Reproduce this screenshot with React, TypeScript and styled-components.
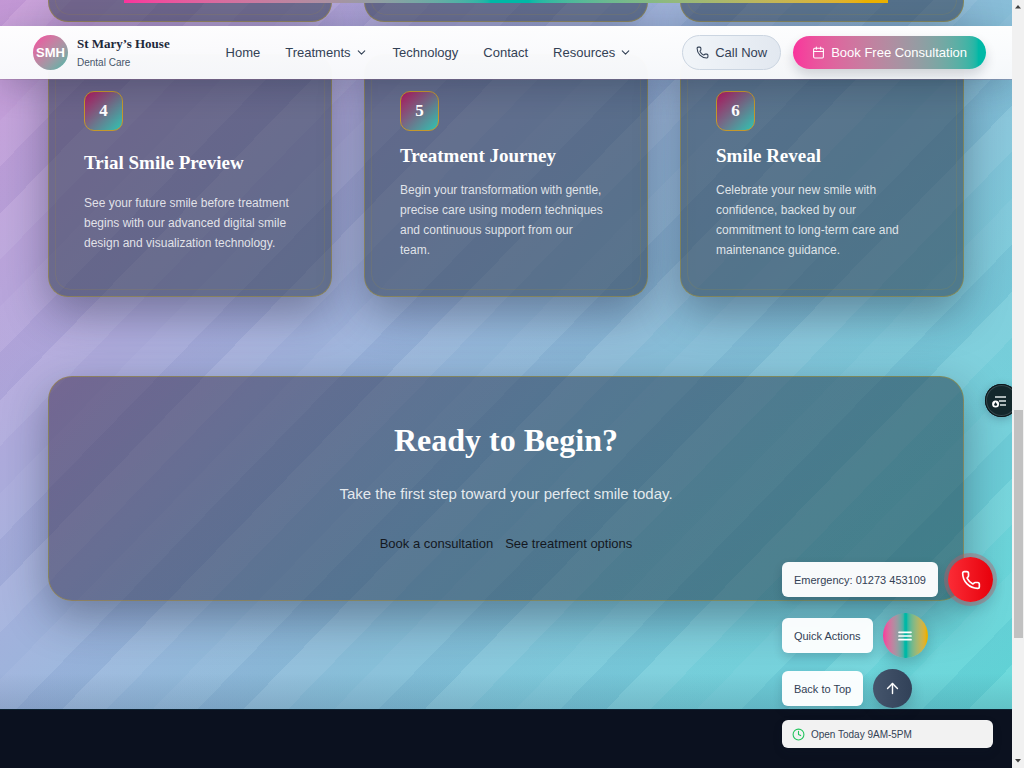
import React from 'react';
import styled, { createGlobalStyle, css } from 'styled-components';
import { ArrowUp, Calendar, ChevronDown, Clock, Phone } from 'lucide-react';

const sans = '"Liberation Sans", Arial, sans-serif';
const serif = '"Liberation Serif", "Times New Roman", serif';
const slate = '#334155';
const pink = '#f9339c';
const teal = '#00b8a6';
const gold = '#eab000';

const GlobalStyle = createGlobalStyle`
  *, *::before, *::after { box-sizing: border-box; }
  body { margin: 0; font-family: ${sans}; color: ${slate}; overflow: hidden; }
  h2, h3, p { margin: 0; }
  a { color: inherit; text-decoration: none; }
  button { font: inherit; border: 0; padding: 0; cursor: pointer; }
`;

const Window = styled.div`
  display: flex;
  height: 100vh;
  overflow: hidden;
`;

const Page = styled.div`
  position: relative;
  flex: 1;
  min-width: 0;
  display: flex;
  flex-direction: column;
  overflow: hidden;
`;

const ProgressBar = styled.div`
  position: absolute;
  z-index: 3;
  top: 0;
  left: 0;
  right: 0;
  display: flex;
  justify-content: center;

  &::before {
    content: '';
    width: 75.5%;
    height: 3px;
    background: linear-gradient(90deg in oklab, ${pink}, ${teal} 48%, ${teal} 53%, ${gold} 97%);
  }
`;

const Header = styled.header`
  position: absolute;
  z-index: 2;
  top: 26px;
  left: 0;
  right: 0;
  height: 53px;
  padding: 0 26px 0 33px;
  display: flex;
  align-items: center;
  justify-content: space-between;
  background: linear-gradient(180deg, rgba(255, 255, 255, 0.98), rgba(249, 250, 252, 0.97));
  box-shadow: 0 8px 32px rgba(15, 23, 42, 0.22), 0 1px 0 rgba(170, 120, 160, 0.35);
`;

const Brand = styled.a`
  display: flex;
  align-items: center;
  gap: 9px;
  padding-right: 6px;
`;

const Logo = styled.span`
  width: 35px;
  height: 35px;
  border-radius: 50%;
  display: grid;
  place-items: center;
  background: linear-gradient(135deg in oklab, #f6409f, #1fb8a8);
  color: #fff;
  font-size: 13px;
  font-weight: 700;
`;

const BrandText = styled.span`
  display: flex;
  flex-direction: column;
  gap: 4px;
`;

const BrandName = styled.span`
  font: 700 13px/16px ${serif};
  color: #1e293b;
`;

const BrandTag = styled.span`
  font-size: 10px;
  line-height: 14px;
  color: #475569;
`;

const Nav = styled.nav`
  display: flex;
  gap: 25px;
  font-size: 13px;
`;

const NavLink = styled.a`
  display: flex;
  align-items: center;
  gap: 4px;
`;

const Actions = styled.div`
  display: flex;
  align-items: center;
  gap: 12px;
`;

const pill = css`
  display: flex;
  align-items: center;
  gap: 6px;
  border-radius: 18px;
  font-size: 13px;
`;

const CallLink = styled.a`
  ${pill}
  height: 35px;
  padding: 0 13px;
  border: 1px solid #cbd5e1;
  background: linear-gradient(90deg, #f1f5f9, #e2e8f0);
`;

const BookLink = styled.a`
  ${pill}
  height: 33px;
  padding: 0 19px;
  color: #fff;
  background: linear-gradient(90deg in oklab, ${pink}, ${teal} 96%);
  box-shadow: 0 6px 12px rgba(15, 23, 42, 0.16);
`;

const Section = styled.main`
  padding: 0 48px 108px;
  background:
    linear-gradient(0deg, rgba(30, 50, 80, 0.14), transparent 36px),
    repeating-linear-gradient(
      134.2deg,
      rgba(60, 80, 140, 0.04) 0 19px,
      rgba(255, 255, 255, 0.08) 19px 51px,
      rgba(255, 255, 255, 0.01) 51px 84px,
      rgba(255, 255, 255, 0.05) 84px 116px,
      rgba(60, 80, 140, 0.04) 116px 130px
    ),
    linear-gradient(135deg, #c99ad8 0%, #b0a8dc 24%, #9ab4dc 42%, #88bcd8 58%, #76ccda 77%, #60d8d8 100%);
`;

const Steps = styled.div`
  display: grid;
  grid-template-columns: repeat(3, 1fr);
  gap: 32px;
`;

const panel = css`
  border: 1px solid rgba(175, 150, 45, 0.48);
  background: rgba(32, 46, 64, 0.51);
  box-shadow: 0 16px 44px rgba(20, 25, 50, 0.38);
`;

const StepTail = styled.div`
  ${panel}
  position: relative;
  height: 22px;
  border-top: 0;
  border-radius: 0 0 20px 20px;

  &::after {
    content: '';
    position: absolute;
    inset: 0 6px 6px;
    border: 1px solid rgba(175, 150, 45, 0.16);
    border-top: 0;
    border-radius: 0 0 16px 16px;
  }
`;

const StepCard = styled.article`
  ${panel}
  position: relative;
  display: grid;
  row-gap: 12px;
  padding: 36px 35px;
  border-radius: 20px;

  &::after {
    content: '';
    position: absolute;
    inset: 6px;
    border: 1px solid rgba(175, 150, 45, 0.16);
    border-radius: 16px;
    pointer-events: none;
  }
`;

const StepNumber = styled.span`
  width: 39px;
  height: 40px;
  display: grid;
  place-items: center;
  border: 1px solid #c4982c;
  border-radius: 10px;
  background: linear-gradient(135deg, #b5175f, #2fc4b2);
  color: #fff;
  font: 700 17px/20px ${serif};
`;

const StepTitle = styled.h3`
  font: 700 19px/25px ${serif};
  color: #fff;
`;

const StepText = styled.p`
  font-size: 12px;
  line-height: 20px;
  white-space: pre-line;
  color: rgba(255, 255, 255, 0.82);
`;

const Cta = styled.section`
  ${panel}
  margin-top: 79px;
  padding: 47px;
  border-radius: 24px;
  text-align: center;
  background: linear-gradient(
    135deg,
    rgba(56, 36, 72, 0.5),
    rgba(32, 50, 76, 0.5) 45%,
    rgba(22, 48, 60, 0.5)
  );
`;

const CtaTitle = styled.h2`
  margin-bottom: 24px;
  font: 700 32px/32px ${serif};
  color: #fff;
`;

const CtaLead = styled.p`
  margin-bottom: 28px;
  font-size: 15px;
  line-height: 27px;
  color: rgba(255, 255, 255, 0.86);
`;

const CtaLinks = styled.div`
  display: flex;
  justify-content: center;
  gap: 12px;
  font-size: 13px;
  line-height: 18px;
  color: #14181f;
`;

const Footer = styled.footer`
  flex: 1;
  border-top: 1px solid #0d2231;
  background: #0b111f;
`;

const Floating = styled.aside`
  position: absolute;
  z-index: 2;
  right: 19px;
  bottom: 20px;
  display: flex;
  flex-direction: column;
  gap: 12px;
`;

const FloatingStack = styled.div`
  display: flex;
  flex-direction: column;
  gap: 11px;
`;

const FloatingRow = styled.div`
  display: flex;
  align-items: center;
  gap: 10px;
`;

const chip = css`
  display: flex;
  align-items: center;
  border-radius: 6px;
  box-shadow: 0 4px 10px rgba(15, 23, 42, 0.16);
`;

const FloatingLabel = styled.label`
  ${chip}
  height: 35px;
  padding: 0 12px;
  background: rgba(255, 255, 255, 0.96);
  font-size: 11px;
`;

const RoundButton = styled.button<{ $size: number; $fill: string; $halo?: boolean }>`
  width: ${p => p.$size}px;
  height: ${p => p.$size}px;
  display: grid;
  place-items: center;
  border-radius: 50%;
  color: #fff;
  background: ${p => p.$fill};
  box-shadow: ${p => (p.$halo ? '0 0 0 4px rgba(190, 90, 100, 0.4), ' : '')}0 6px 14px rgba(15, 23, 42, 0.2);
`;

const Hours = styled.p`
  ${chip}
  height: 28px;
  padding: 0 10px;
  gap: 6px;
  background: #f2f2f2;
  font-size: 10px;
`;

const Accessibility = styled.button`
  position: absolute;
  z-index: 2;
  top: 384px;
  right: -6px;
  width: 33px;
  height: 33px;
  display: grid;
  place-items: center start;
  padding-left: 6px;
  border-radius: 50%;
  background: #14282c;
  box-shadow: inset 0 0 0 1px #0a1519, inset 0 0 0 2px #35474c, 0 2px 8px rgba(15, 23, 42, 0.25);
`;

const Scrollbar = styled.div`
  width: 12px;
  display: flex;
  flex-direction: column;
  align-items: center;
  padding: 5px 0;
  background: #f1f1f1;
`;

const ScrollSpace = styled.div<{ $grow: number }>`
  flex: ${p => p.$grow};
`;

const ScrollThumb = styled.div`
  flex: 228;
  width: 9px;
  background: #c1c1c1;
`;

const ScrollArrow = ({ down = false }: { down?: boolean }) => (
  <svg width="6" height="4" viewBox="0 0 6 4" aria-hidden="true">
    <path d={down ? 'M0 0h6L3 3.5z' : 'M0 3.5h6L3 0z'} fill="#3f3f3f" />
  </svg>
);

const BarsIcon = () => (
  <svg width="14" height="12" viewBox="0 0 14 12" aria-hidden="true">
    <path d="M1 2.3h12M1 6h12M1 9.7h12" stroke="currentColor" strokeWidth="1.7" strokeLinecap="round" />
  </svg>
);

const navItems = [
  { label: 'Home' },
  { label: 'Treatments', menu: true },
  { label: 'Technology' },
  { label: 'Contact' },
  { label: 'Resources', menu: true },
];

const steps = [
  {
    n: 4,
    title: 'Trial Smile Preview',
    text: `See your future smile before treatment
begins with our advanced digital smile
design and visualization technology.`,
  },
  {
    n: 5,
    title: 'Treatment Journey',
    text: `Begin your transformation with gentle,
precise care using modern techniques
and continuous support from our
team.`,
  },
  {
    n: 6,
    title: 'Smile Reveal',
    text: `Celebrate your new smile with
confidence, backed by our
commitment to long-term care and
maintenance guidance.`,
  },
];

export default function App() {
  return (
    <Window>
      <GlobalStyle />
      <Page>
        <ProgressBar />
        <Header>
          <Brand href="#home">
            <Logo>SMH</Logo>
            <BrandText>
              <BrandName>St Mary’s House</BrandName>
              <BrandTag>Dental Care</BrandTag>
            </BrandText>
          </Brand>
          <Nav>
            {navItems.map(item => (
              <NavLink key={item.label} href={`#${item.label.toLowerCase()}`}>
                {item.label}
                {item.menu && <ChevronDown size={13} />}
              </NavLink>
            ))}
          </Nav>
          <Actions>
            <CallLink href="tel:01273453109">
              <Phone size={13} />
              Call Now
            </CallLink>
            <BookLink href="#book">
              <Calendar size={13} />
              Book Free Consultation
            </BookLink>
          </Actions>
        </Header>

        <Section>
          <Steps>
            <StepTail />
            <StepTail />
            <StepTail />
            {steps.map(step => (
              <StepCard key={step.n}>
                <StepNumber>{step.n}</StepNumber>
                <StepTitle>{step.title}</StepTitle>
                <StepText>{step.text}</StepText>
              </StepCard>
            ))}
          </Steps>
          <Cta>
            <CtaTitle>Ready to Begin?</CtaTitle>
            <CtaLead>Take the first step toward your perfect smile today.</CtaLead>
            <CtaLinks>
              <a href="#consultation">Book a consultation</a>
              <a href="#treatments">See treatment options</a>
            </CtaLinks>
          </Cta>
        </Section>
        <Footer />

        <Accessibility aria-label="Accessibility options">
          <svg width="18" height="16" viewBox="0 0 18 16" fill="none" aria-hidden="true">
            <path d="M4 4h11M8 8h7M9 12h6" stroke="#dfe6e6" strokeWidth="1.3" />
            <circle cx="4.6" cy="11" r="3.5" fill="#fff" />
            <path d="M4.6 9l1.5 2.4-.5 1.4h-2l-.5-1.4z" fill="#10242a" />
          </svg>
        </Accessibility>

        <Floating>
          <FloatingStack>
            <FloatingRow>
              <FloatingLabel htmlFor="emergency">Emergency: 01273 453109</FloatingLabel>
              <RoundButton id="emergency" $size={45} $fill="linear-gradient(90deg, #fb2c36, #e7000b)" $halo>
                <Phone size={20} />
              </RoundButton>
            </FloatingRow>
            <FloatingRow>
              <FloatingLabel htmlFor="quick">Quick Actions</FloatingLabel>
              <RoundButton
                id="quick"
                $size={45}
                $fill={`linear-gradient(90deg in oklab, ${pink}, ${teal} 48%, ${teal} 53%, ${gold} 96%)`}
              >
                <BarsIcon />
              </RoundButton>
            </FloatingRow>
            <FloatingRow>
              <FloatingLabel htmlFor="top">Back to Top</FloatingLabel>
              <RoundButton id="top" $size={39} $fill="linear-gradient(90deg, #45556c, #314158)">
                <ArrowUp size={17} />
              </RoundButton>
            </FloatingRow>
          </FloatingStack>
          <Hours>
            <Clock size={13} color="#22c55e" />
            Open Today 9AM-5PM
          </Hours>
        </Floating>
      </Page>

      <Scrollbar aria-hidden="true">
        <ScrollArrow />
        <ScrollSpace $grow={401} />
        <ScrollThumb />
        <ScrollSpace $grow={121} />
        <ScrollArrow down />
      </Scrollbar>
    </Window>
  );
}
